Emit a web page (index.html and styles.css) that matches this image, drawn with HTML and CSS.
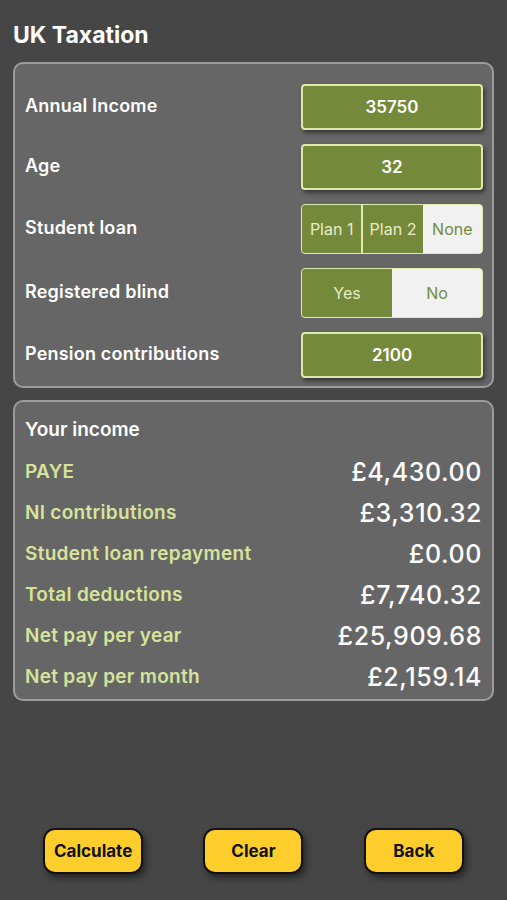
FILE: index.html
```html
<!DOCTYPE html>
<html lang="en">
<head>
    <meta charset="UTF-8">
    <title>UK Taxation</title>
    <link rel="stylesheet" href="styles.css">
</head>
<body>
    <h1>UK Taxation</h1>

    <!-- Inputs -->
    <div class="panel inputs">
        <div class="row">
            <span class="label">Annual Income</span>
            <div class="field">35750</div>
        </div>
        <div class="row">
            <span class="label">Age</span>
            <div class="field">32</div>
        </div>
        <div class="row">
            <span class="label">Student loan</span>
            <div class="segments tall">
                <span class="seg on">Plan 1</span>
                <span class="seg on">Plan 2</span>
                <span class="seg">None</span>
            </div>
        </div>
        <div class="row">
            <span class="label">Registered blind</span>
            <div class="segments tall">
                <span class="seg on">Yes</span>
                <span class="seg">No</span>
            </div>
        </div>
        <div class="row">
            <span class="label">Pension contributions</span>
            <div class="field">2100</div>
        </div>
    </div>

    <!-- Results -->
    <div class="panel results">
        <div class="heading">Your income</div>
        <div class="result"><span>PAYE</span><span class="value">£4,430.00</span></div>
        <div class="result"><span>NI contributions</span><span class="value">£3,310.32</span></div>
        <div class="result"><span>Student loan repayment</span><span class="value">£0.00</span></div>
        <div class="result"><span>Total deductions</span><span class="value">£7,740.32</span></div>
        <div class="result"><span>Net pay per year</span><span class="value">£25,909.68</span></div>
        <div class="result"><span>Net pay per month</span><span class="value">£2,159.14</span></div>
    </div>

    <div class="buttons">
        <button type="button">Calculate</button>
        <button type="button">Clear</button>
        <button type="button">Back</button>
    </div>
</body>
</html>
```

FILE: styles.css
```css
body {
    font-family: 'Inter', 'Roboto', sans-serif;
    background-color: #464646;
    color: white;
    margin: 0;
    padding: 0 13px;
    height: 900px;
    box-sizing: border-box;
    display: flex;
    flex-direction: column;
}
h1 {
    font-size: 23px;
    font-weight: 700;
    margin: 21px 0 0 0;
    height: 41px;
    line-height: 28px;
}
.panel {
    background: #666666;
    border: 2px solid #9c9c9c;
    border-radius: 10px;
}
.inputs {
    display: flex;
    flex-direction: column;
    gap: 14px;
    padding: 20px 9px 8px 10px;
}
.row {
    display: flex;
    justify-content: space-between;
    align-items: center;
    height: 46px;
}
.label {
    font-size: 18px;
    font-weight: 600;
    letter-spacing: 0.2px;
    margin-top: -4px;
}
.field {
    width: 178px;
    height: 42px;
    background: #74893a;
    border: 2px solid #dfe9ae;
    border-radius: 4px;
    box-shadow: 2px 3px 4px rgba(0, 0, 0, 0.45);
    display: flex;
    justify-content: center;
    align-items: center;
    font-size: 17px;
    font-weight: 600;
}
.row:has(.tall) {
    height: 50px;
}
.segments {
    display: flex;
    width: 180px;
    height: 48px;
    border: 1px solid #dfe9ae;
    border-radius: 4px;
    overflow: hidden;
    background: #f1f1f1;
}
.seg {
    flex: 1;
    display: flex;
    justify-content: center;
    align-items: center;
    font-size: 16px;
    color: #74893a;
}
.seg.on {
    background: #74893a;
    color: #e6edc8;
}
.seg.on + .seg.on {
    border-left: 2px solid #dfe9ae;
}
.results {
    margin-top: 12px;
    padding: 7px 10px 2px 10px;
}
.heading {
    height: 42px;
    line-height: 42px;
    font-size: 19px;
    font-weight: 600;
}
.result {
    display: flex;
    justify-content: space-between;
    align-items: center;
    height: 41px;
    font-size: 19px;
    font-weight: 600;
    letter-spacing: 0.3px;
    color: #d6e39a;
}
.value {
    color: white;
    font-size: 25px;
    font-weight: 500;
    letter-spacing: 0.6px;
}
.buttons {
    margin-top: auto;
    margin-bottom: 26px;
    display: grid;
    grid-template-columns: 1fr 1fr 1fr;
    justify-items: center;
}
button {
    width: 100px;
    height: 46px;
    background-color: #fdcd2c;
    border: 2px solid #111;
    border-radius: 12px;
    box-shadow: 3px 4px 6px rgba(0, 0, 0, 0.45);
    font-family: 'Inter', 'Roboto', sans-serif;
    font-size: 17px;
    font-weight: 700;
    color: #111;
    cursor: pointer;
}
```
